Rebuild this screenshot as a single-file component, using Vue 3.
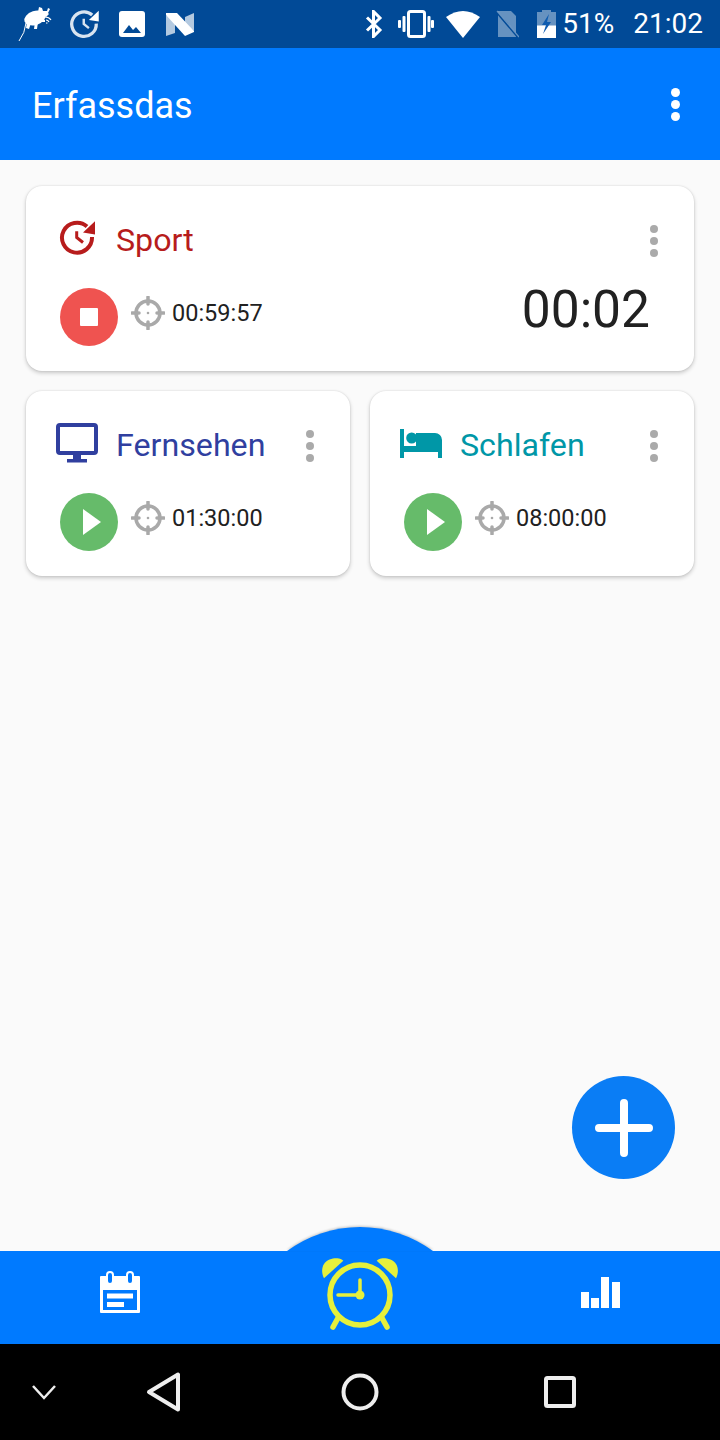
<script setup>
const cards = [
  { id: 'fernsehen', name: 'Fernsehen', target: '01:30:00', color: '#303f9f', icon: 'monitor' },
  { id: 'schlafen', name: 'Schlafen', target: '08:00:00', color: '#0097a7', icon: 'bed' },
]
</script>

<template>
  <div class="page">
    <div class="status-bar">
      <div class="status-left">
        <!-- Maus mit Funkwellen -->
        <svg width="36" height="36" viewBox="0 0 36 36" fill="#fff">
          <ellipse cx="17" cy="12" rx="11" ry="7" transform="rotate(-18 17 12)" />
          <path d="M20 6l1-5 3 1 1 3 4 0 1-3 2 1-2 4 1 1-3 3z" />
          <path d="M9 16l-1 6 3 1 2-6zM17 16l-1 7 3 0 1-7zM24 13l3 1 0 2-4 0z" />
          <path d="M8 17q-1 10-7 18" fill="none" stroke="#fff" stroke-width="1" />
          <path d="M27 11q4 0 6 3M28 14q2 0 3 2M28 17h1.500" fill="none" stroke="#fff" stroke-width="1.200" />
        </svg>
        <svg width="36" height="36" viewBox="-3 -3 44 44">
          <path d="M29 8A15 15 0 1 0 34 18.500" fill="none" stroke="#fff" stroke-opacity=".85" stroke-width="4" />
          <path d="M37 2.700L25 14l12 2z" fill="#fff" />
          <path d="M18.700 12.700V19L25 24" fill="none" stroke="#fff" stroke-opacity=".85" stroke-width="3" />
        </svg>
        <svg width="36" height="36" viewBox="0 0 36 36">
          <rect x="5" y="5" width="26" height="26" rx="3" fill="#fff" />
          <path d="M9 27l6-8 4 5 3-3 5 6z" fill="#014a97" />
        </svg>
        <svg width="36" height="36" viewBox="0 0 36 36">
          <path d="M4 9l9 6v12l-9 3zM23 11l9-4v18l-9-7z" fill="#fff" fill-opacity=".7" />
          <path d="M4 9V7h11l17 18v1l-9 4z" fill="#fff" />
        </svg>
      </div>
      <div class="status-right">
        <svg class="st-bt" width="18" height="28" viewBox="0 0 18 28">
          <path d="M2 7.500l13 12.500-6.500 6.500V1.500L15 8 2 20.500" fill="none" stroke="#fff" stroke-width="3" />
        </svg>
        <svg class="st-vib" width="36" height="28" viewBox="0 0 36 28" fill="#fff">
          <rect x="10.500" y="1.500" width="16" height="25" rx="2" fill="none" stroke="#fff" stroke-width="3" />
          <rect x="0" y="10" width="3" height="8" rx="1" />
          <rect x="4.500" y="6" width="3" height="16" rx="1" />
          <rect x="29.500" y="6" width="3" height="16" rx="1" />
          <rect x="33" y="10" width="3" height="8" rx="1" />
        </svg>
        <svg class="st-wifi" width="34" height="28" viewBox="0 0 34 28">
          <path d="M0 7Q17-5 34 7L17 28z" fill="#fff" />
        </svg>
        <svg class="st-sim" width="23" height="28" viewBox="0 0 23 28">
          <path d="M2 1h13l5 5v21H2z" fill="#fff" fill-opacity=".4" />
          <path d="M0 1l22 26" stroke="#014a97" stroke-width="2.500" />
          <path d="M1 1l22 26" stroke="#fff" stroke-opacity=".4" stroke-width="1.200" />
        </svg>
        <svg class="st-bat" width="19" height="28" viewBox="0 0 19 28">
          <path d="M5 0h9v2h5v26H0V2h5z" fill="#fff" fill-opacity=".4" />
          <path d="M0 15.500h19V28H0z" fill="#fff" />
          <path d="M12 4L5 15h4l-3 9 8-12h-4z" fill="#0f5cb0" />
        </svg>
        <span class="st-pct">51%</span>
        <span class="st-time">21:02</span>
      </div>
    </div>

    <header class="app-bar">
      <span class="app-title">Erfassdas</span>
      <div class="app-menu">
        <i></i><i></i><i></i>
      </div>
    </header>

    <main class="content">
      <div class="grid">
        <section class="card wide">
          <div class="card-head">
            <span class="card-icon">
              <svg width="48" height="48" viewBox="0 0 48 48">
                <g transform="translate(5 1.500)">
                  <path d="M29 8A15 15 0 1 0 34 18.500" fill="none" stroke="#b71c1c" stroke-width="4" />
                  <path d="M37 2.700L25 14l12 2z" fill="#b71c1c" />
                  <path d="M18.700 12.700V19L25 24" fill="none" stroke="#b71c1c" stroke-width="3" />
                </g>
              </svg>
            </span>
            <span class="card-title sport">Sport</span>
            <div class="card-menu"><i></i><i></i><i></i></div>
          </div>
          <div class="card-body">
            <span class="round-btn stop"><b></b></span>
            <svg class="target" width="34" height="34" viewBox="0 0 34 34">
              <circle cx="17" cy="17" r="12" fill="none" stroke="#a9a9a9" stroke-width="3.500" />
              <path d="M17 1v7M17 26v7M1 17h7M26 17h7" stroke="#a9a9a9" stroke-width="3.500" stroke-linecap="round" />
              <circle cx="17" cy="17" r="1.300" fill="#a9a9a9" />
            </svg>
            <span class="target-time">00:59:57</span>
            <span class="running">00:02</span>
          </div>
        </section>

        <section v-for="card in cards" :key="card.id" class="card">
          <div class="card-head">
            <span class="card-icon">
              <svg v-if="card.icon === 'monitor'" width="48" height="48" viewBox="0 0 48 48" :fill="card.color">
                <rect x="5" y="3" width="38" height="28" rx="2" fill="none" :stroke="card.color" stroke-width="4" />
                <rect x="20" y="32" width="8" height="6" />
                <rect x="14" y="37" width="20" height="3.500" />
              </svg>
              <svg v-else width="48" height="48" viewBox="0 0 48 48" :fill="card.color">
                <circle cx="14.700" cy="16" r="5.500" />
                <path d="M3 7h4v17h12V11h19a7 7 0 0 1 7 7v18h-4v-6H7v6H3z" />
              </svg>
            </span>
            <span class="card-title" :style="{ color: card.color }">{{ card.name }}</span>
            <div class="card-menu"><i></i><i></i><i></i></div>
          </div>
          <div class="card-body">
            <span class="round-btn play">
              <svg width="58" height="58" viewBox="0 0 58 58"><path d="M23 16v26l18-13z" fill="#fff" /></svg>
            </span>
            <svg class="target" width="34" height="34" viewBox="0 0 34 34">
              <circle cx="17" cy="17" r="12" fill="none" stroke="#a9a9a9" stroke-width="3.500" />
              <path d="M17 1v7M17 26v7M1 17h7M26 17h7" stroke="#a9a9a9" stroke-width="3.500" stroke-linecap="round" />
              <circle cx="17" cy="17" r="1.300" fill="#a9a9a9" />
            </svg>
            <span class="target-time">{{ card.target }}</span>
          </div>
        </section>
      </div>

      <button class="fab">
        <svg width="103" height="103" viewBox="0 0 103 103">
          <path d="M52 27v50M27 52h50" stroke="#fff" stroke-width="8" stroke-linecap="round" />
        </svg>
      </button>
    </main>

    <nav class="tab-bar">
      <svg class="bump" width="160" height="26" viewBox="0 0 160 26">
        <path d="M7 26A123 123 0 0 1 153 26z" fill="#007aff" />
      </svg>
      <div class="tab">
        <svg width="44" height="44" viewBox="0 0 44 44">
          <rect x="2" y="5" width="40" height="37" rx="1" fill="#fff" />
          <rect x="5" y="19" width="34" height="20" fill="#007aff" />
          <path d="M9 22.500h26v5H9zM9 31h17v5H9z" fill="#fff" />
          <rect x="9" y="1" width="6" height="12" rx="3" fill="#007aff" stroke="#fff" stroke-width="2" />
          <rect x="29" y="1" width="6" height="12" rx="3" fill="#007aff" stroke="#fff" stroke-width="2" />
        </svg>
      </div>
      <div class="tab">
        <svg width="80" height="80" viewBox="0 0 80 80" class="alarm">
          <circle cx="40" cy="40" r="30" fill="none" stroke="#e6f03c" stroke-width="5.500" />
          <path d="M4 23.300C1.500 18 1.500 13 4 9 7 4.500 13 3 17.300 3.300 19.500 3.500 22 4.500 23.300 5.700z" fill="#e6f03c" />
          <path d="M76 23.300C78.500 18 78.500 13 76 9 73 4.500 67 3 62.700 3.300 60.500 3.500 58 4.500 56.700 5.700z" fill="#e6f03c" />
          <path d="M18 63l-5 9M62 63l5 9" stroke="#e6f03c" stroke-width="5.500" stroke-linecap="round" />
          <path d="M40 25v15H18" fill="none" stroke="#e6f03c" stroke-width="3.500" stroke-linecap="round" />
          <circle cx="40" cy="40" r="4.500" fill="#e6f03c" />
        </svg>
      </div>
      <div class="tab">
        <svg width="44" height="36" viewBox="0 0 44 36" fill="#fff">
          <rect x="3" y="17" width="8" height="16" />
          <rect x="13" y="23" width="8" height="10" />
          <rect x="23" y="2" width="8" height="31" />
          <rect x="34" y="7" width="8" height="26" />
        </svg>
      </div>
    </nav>

    <div class="sys-nav">
      <div class="sys-cell">
        <svg width="28" height="18" viewBox="0 0 28 18">
          <path d="M3 3l11 12L25 3" fill="none" stroke="#eee" stroke-width="2.500" />
        </svg>
      </div>
      <div class="sys-cell">
        <svg width="40" height="42" viewBox="0 0 40 42">
          <path d="M34 3.500v35L5 21z" fill="none" stroke="#eee" stroke-width="4" stroke-linejoin="round" />
        </svg>
      </div>
      <div class="sys-cell">
        <svg width="40" height="40" viewBox="0 0 40 40">
          <circle cx="20" cy="20" r="16.500" fill="none" stroke="#eee" stroke-width="4" />
        </svg>
      </div>
      <div class="sys-cell">
        <svg width="36" height="36" viewBox="0 0 36 36">
          <rect x="4" y="4" width="28" height="28" rx="1.500" fill="none" stroke="#eee" stroke-width="4" />
        </svg>
      </div>
    </div>
  </div>
</template>

<style>
html,
body {
  margin: 0;
  padding: 0;
}
</style>

<style scoped>
.page {
  width: 720px;
  height: 1440px;
  display: flex;
  flex-direction: column;
  overflow: hidden;
  background: #fafafa;
  font-family: Roboto, "Liberation Sans", sans-serif;
}

.status-bar {
  height: 48px;
  flex: none;
  display: flex;
  align-items: center;
  justify-content: space-between;
  background: #014a97;
  color: #fff;
}

.status-left {
  display: flex;
  align-items: center;
  gap: 12px;
  padding-left: 18px;
}

.status-right {
  display: flex;
  align-items: center;
  padding-right: 17px;
  font-size: 28px;
  line-height: 48px;
}

.status-right svg {
  display: block;
}

.st-vib { margin-left: 15px; }
.st-wifi { margin-left: 12px; }
.st-sim { margin-left: 16px; }
.st-bat { margin-left: 18px; }
.st-pct { margin-left: 6px; }
.st-time { margin-left: 19px; }

.app-bar {
  height: 112px;
  flex: none;
  display: flex;
  align-items: center;
  justify-content: space-between;
  box-sizing: border-box;
  padding: 0 40px 0 32px;
  background: #007aff;
  color: #fff;
}

.app-title {
  margin-top: 3px;
  font-size: 36px;
}

.app-menu {
  display: flex;
  flex-direction: column;
  gap: 3px;
}

.app-menu i {
  width: 9px;
  height: 9px;
  border-radius: 50%;
  background: #fff;
}

.content {
  flex: 1;
  position: relative;
}

.grid {
  display: grid;
  grid-template-columns: 1fr 1fr;
  gap: 20px;
  padding: 26px 26px 0;
}

.card {
  height: 185px;
  box-sizing: border-box;
  padding-top: 31px;
  border-radius: 16px;
  background: #fff;
  box-shadow: 0 2px 4px rgba(0, 0, 0, 0.2), 0 0 2px rgba(0, 0, 0, 0.12);
}

.card.wide {
  grid-column: span 2;
}

.card-head {
  height: 48px;
  display: flex;
  align-items: center;
  padding: 0 16px 0 27px;
}

.card-icon {
  width: 48px;
  height: 48px;
  flex: none;
}

.card-icon svg {
  display: block;
}

.card-title {
  margin-left: 15px;
  margin-bottom: 3px;
  font-size: 32.2px;
}

.card-title.sport {
  color: #b71c1c;
}

.card-menu {
  margin-left: auto;
  width: 48px;
  display: flex;
  flex-direction: column;
  align-items: center;
  gap: 4px;
}

.card-menu i {
  width: 8px;
  height: 8px;
  border-radius: 50%;
  background: #aaa;
}

.card-body {
  height: 58px;
  display: flex;
  align-items: center;
  margin-top: 23px;
  padding: 0 44px 0 34px;
}

.round-btn {
  width: 58px;
  height: 58px;
  flex: none;
  display: flex;
  align-items: center;
  justify-content: center;
  border-radius: 50%;
}

.round-btn.stop {
  background: #ef5350;
}

.round-btn.stop b {
  width: 18px;
  height: 18px;
  border-radius: 1px;
  background: #fff;
}

.round-btn.play {
  background: #66bb6a;
}

.target {
  flex: none;
  margin-left: 13px;
  margin-bottom: 8px;
}

.target-time {
  margin-left: 7px;
  margin-bottom: 8px;
  font-size: 23.5px;
  color: #212121;
}

.running {
  margin-left: auto;
  margin-top: -15px;
  font-size: 51.5px;
  line-height: 58px;
  color: #212121;
}

.fab {
  position: absolute;
  left: 572px;
  top: 916px;
  width: 103px;
  height: 103px;
  padding: 0;
  border: none;
  border-radius: 50%;
  background: #0a7df5;
}

.fab svg {
  display: block;
}

.tab-bar {
  height: 93px;
  flex: none;
  position: relative;
  display: grid;
  grid-template-columns: 240px 240px 240px;
  box-sizing: border-box;
  padding-bottom: 9px;
  background: #007aff;
}

.bump {
  position: absolute;
  left: 280px;
  top: -26px;
  filter: drop-shadow(0 -1px 1px rgba(0, 0, 0, 0.2));
}

.tab {
  display: flex;
  align-items: center;
  justify-content: center;
}

.tab svg {
  display: block;
}

.alarm {
  position: relative;
  top: 2px;
}

.sys-nav {
  height: 96px;
  flex: none;
  display: grid;
  grid-template-columns: 88px 152px 240px 160px;
  background: #000;
}

.sys-cell {
  display: flex;
  align-items: center;
  justify-content: center;
}
</style>
